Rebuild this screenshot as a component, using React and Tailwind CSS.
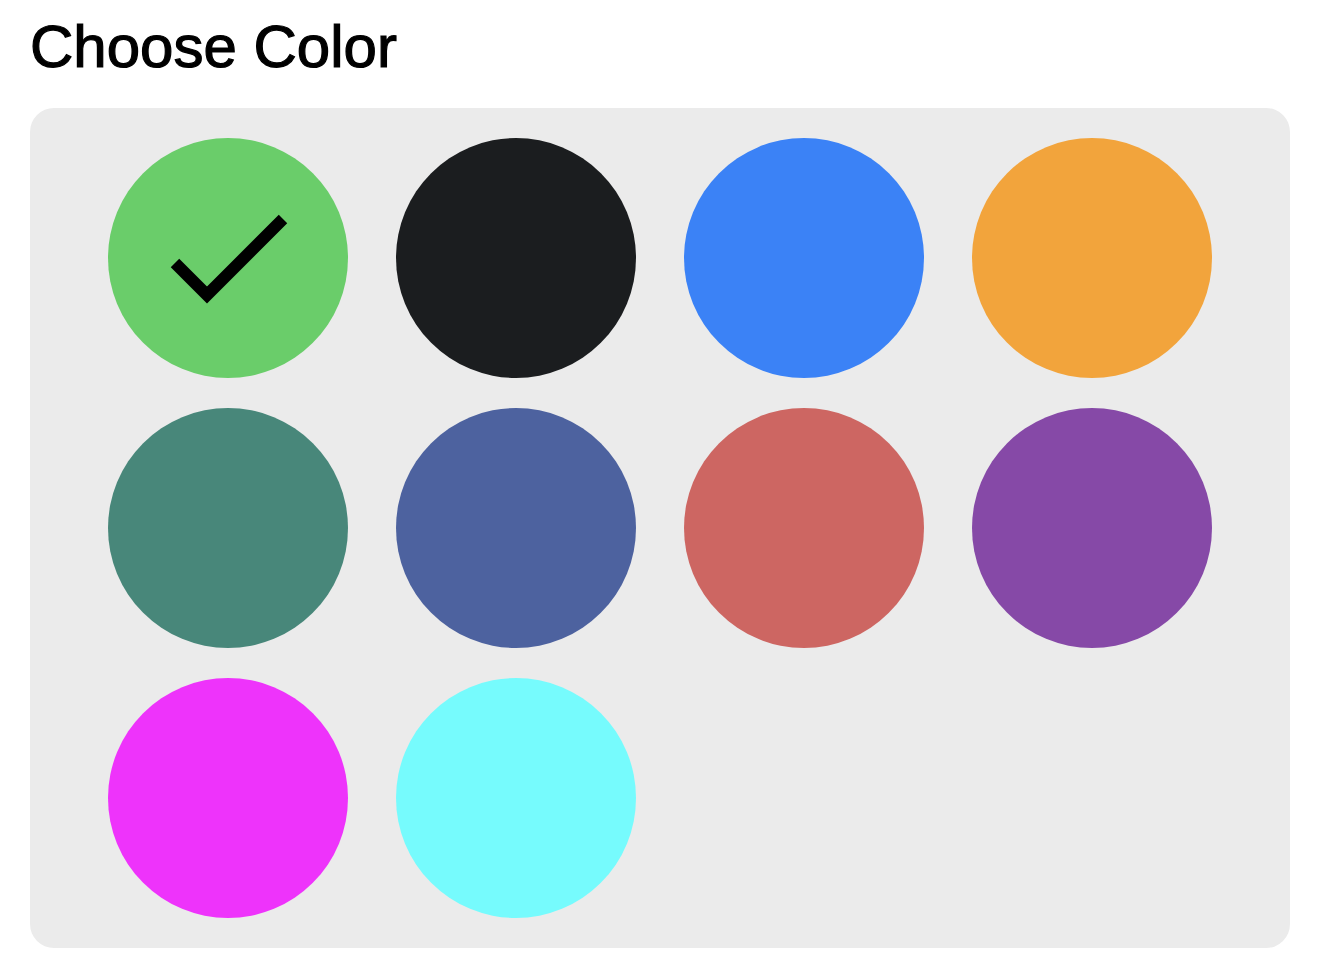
const colors = [
  { name: 'green', bg: 'bg-[#6acd6a]' },
  { name: 'black', bg: 'bg-[#1b1d1f]' },
  { name: 'blue', bg: 'bg-[#3b82f6]' },
  { name: 'orange', bg: 'bg-[#f2a43c]' },
  { name: 'teal', bg: 'bg-[#48877a]' },
  { name: 'indigo', bg: 'bg-[#4d629f]' },
  { name: 'red', bg: 'bg-[#cd6662]' },
  { name: 'purple', bg: 'bg-[#8649a7]' },
  { name: 'magenta', bg: 'bg-[#ee33fb]' },
  { name: 'cyan', bg: 'bg-[#76fbfd]' },
];

const Check = () => (
  <svg viewBox="0 0 240 240" className="w-full h-full">
    <polyline
      points="67,125 99,157 175,81"
      fill="none"
      stroke="#000"
      strokeWidth="12"
      strokeLinecap="butt"
      strokeLinejoin="miter"
    />
  </svg>
);

const App = () => {
  const selected = 'green';

  return (
    <div className="bg-white min-h-screen px-[30px] font-['Liberation_Sans',Arial,sans-serif]">
      <h1 className="pt-[12px] text-[60px] leading-[70px] font-medium text-black [-webkit-text-stroke:1.2px_black]">
        Choose Color
      </h1>
      <div className="mt-[26px] w-[1260px] rounded-[24px] bg-[#ebebeb] px-[78px] py-[30px]">
        <div className="grid grid-cols-4 gap-x-[48px] gap-y-[30px]">
          {colors.map((c) => (
            <button key={c.name} className={`w-[240px] h-[240px] rounded-full ${c.bg}`}>
              {selected === c.name && <Check />}
            </button>
          ))}
        </div>
      </div>
    </div>
  );
};

export default App;
